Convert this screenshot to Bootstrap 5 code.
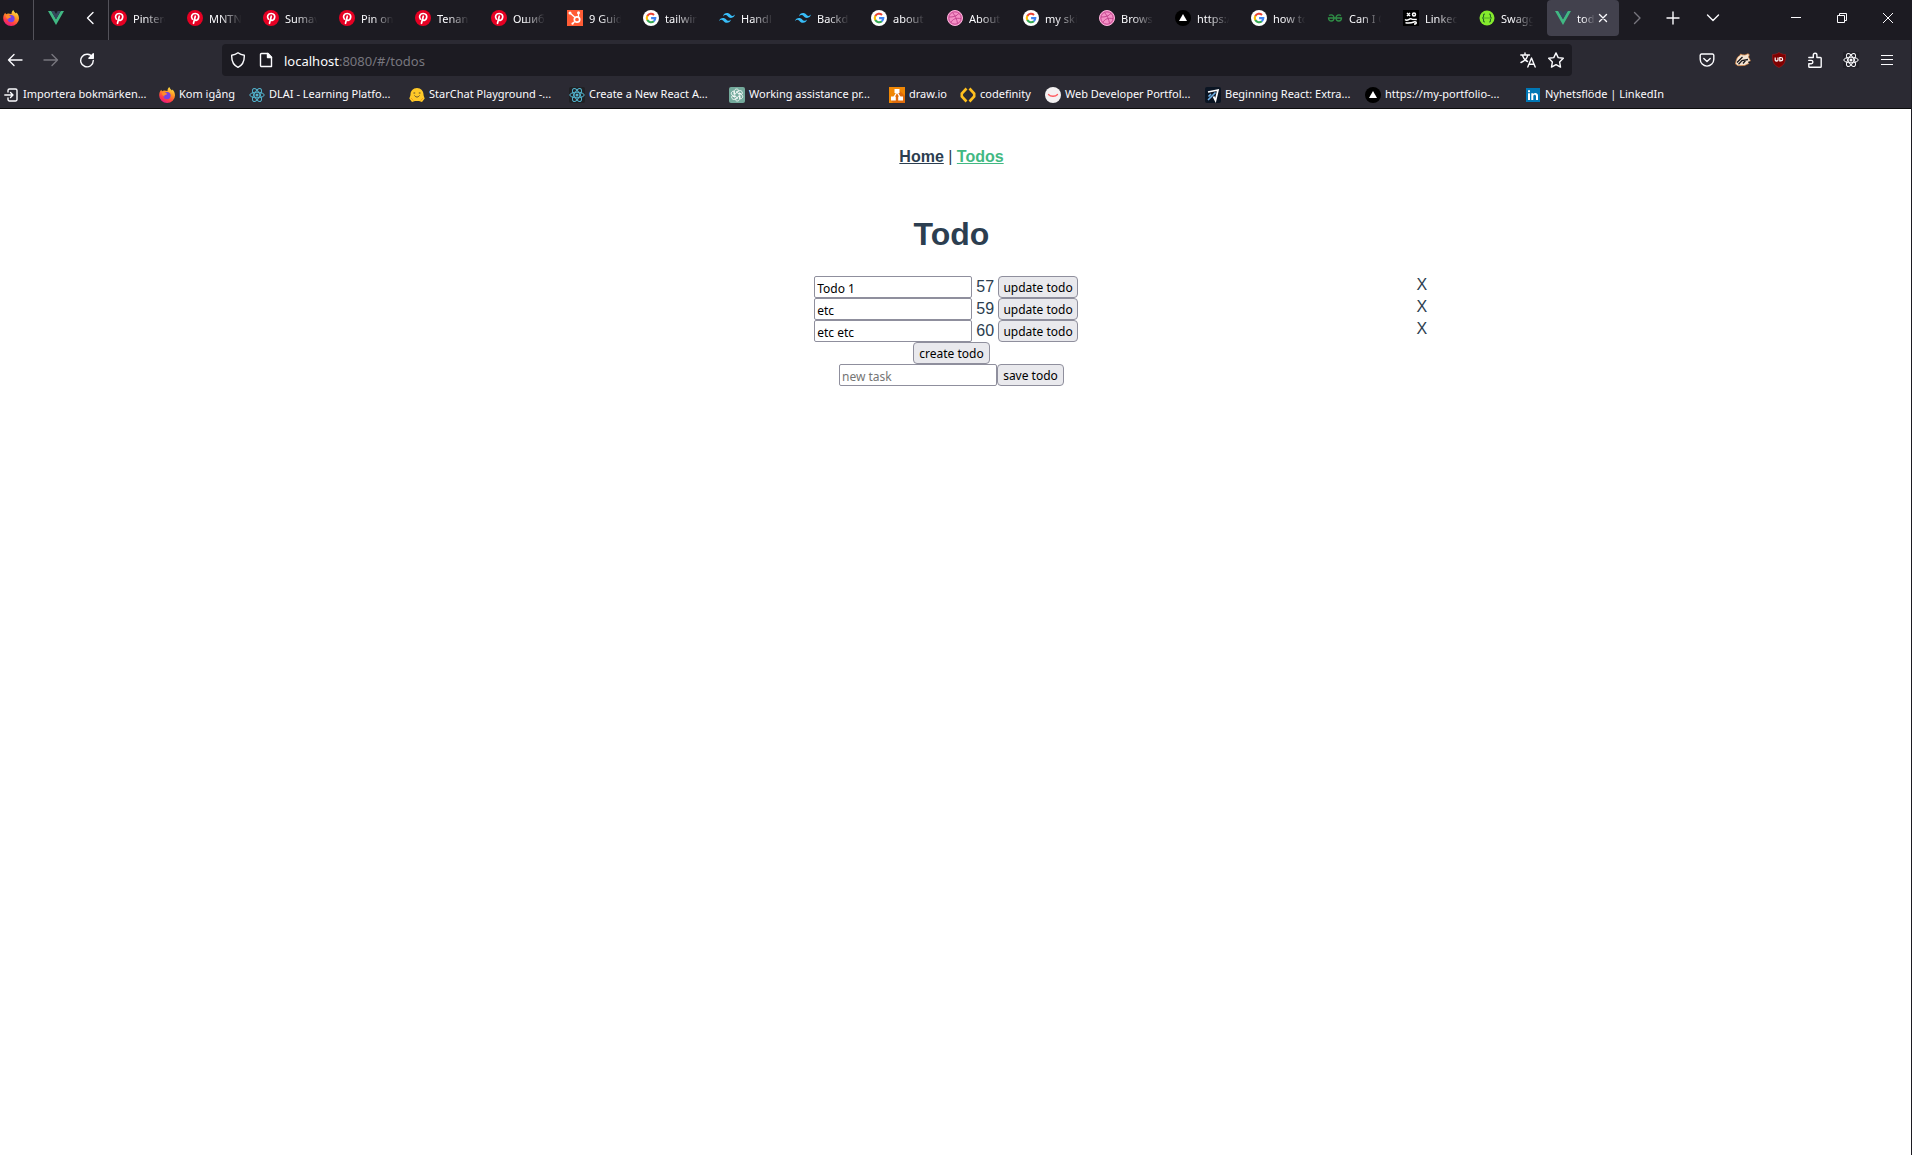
<!DOCTYPE html>
<html lang="sv">
<head>
<meta charset="utf-8">
<meta name="viewport" content="width=device-width, initial-scale=1">
<title>todo</title>
<link href="https://cdn.jsdelivr.net/npm/bootstrap@5.3.0/dist/css/bootstrap.min.css" rel="stylesheet">
<style>
  body { background: #fff; border-right: 1px solid #1c1b22; font-family: "Liberation Sans", Arial, sans-serif; }
  button { color: inherit; }
  svg { display: block; flex: none; }

  /* browser chrome */
  .chrome { background: #2b2a33; color: #fbfbfe; font: 11px/16px "Noto Sans", "Open Sans", sans-serif; border-bottom: 1px solid #0c0c0d; }
  .chrome a { color: inherit; text-decoration: none; }
  .icon-btn { background: none; border: 0; padding: 0; display: flex; align-items: center; justify-content: center; width: 36px; height: 32px; flex: none; }
  .dimmed { color: #77767e; }
  .line-art { fill: none; stroke: currentColor; stroke-width: 1.4; stroke-linecap: round; stroke-linejoin: round; }

  .tab-strip { background: #1c1b22; height: 40px; }
  .pinned { height: 40px; border-right: 1px solid #53525a; padding-bottom: 4px; flex: none; }
  .pin-first { width: 34px; padding-left: 3px; }
  .pin-second { width: 75px; padding-left: 14px; }
  .tab-scroller { height: 36px; min-width: 0; overflow: hidden; }
  .tab-item { width: 76px; flex: none; padding: 0 10px 0 8px; gap: 6px; height: 36px; }
  .tab-item.current { width: 72px; background: #42414d; border-radius: 4px; padding-right: 8px; }
  .tab-text { flex: 1; min-width: 0; padding-top: 2px; overflow: hidden; white-space: nowrap; -webkit-mask-image: linear-gradient(to right, #000 30%, transparent 90%); mask-image: linear-gradient(to right, #000 30%, transparent 90%); }
  .tab-item.current .tab-text { flex: 0 0 20px; }
  .tab-item.current .icon-btn { width: 12px; margin-left: -6px; }
  .strip-tools { width: 292px; height: 36px; flex: none; }
  .win-btn { width: 46px; }
  .strip-tools .tab-list { width: 44px; }

  .nav-bar { height: 41px; padding: 4px 6px 5px 0; }
  .nav-left { width: 222px; padding-left: 0; flex: none; margin-left: -3px; margin-right: 3px; }
  .address { background: #1c1b22; border-radius: 4px; height: 32px; padding: 0 2px 0 8px; }
  .address-tool { width: 28px; }
  .address-text { font-size: 13px; line-height: 20px; padding-top: 1px; }
  .address-page { margin: 0 10px 0 12px; }
  .ext-tools { width: 333px; flex: none; }

  .bookmarks { height: 27px; padding: 0 4px 2px; white-space: nowrap; overflow: hidden; }
  .bm { display: flex; align-items: center; gap: 4px; flex: none; }
  .bm > svg { margin-top: 2px; }
  .bm-import { width: 155px; }
  .bm-short { width: 90px; }
  .bm-long { width: 160px; }
  .bm-draw { width: 71px; }
  .bm-code { width: 85px; }

  /* todo page */
  .todo-app { color: #2c3e50; font-size: 16px; line-height: 18px; padding: 9px 8px 0 0; text-align: center; }
  .site-nav { padding: 30px; }
  .site-nav a { color: #2c3e50; font-weight: 700; }
  .site-nav a.active-page { color: #42b983; }
  .todo-app h1 { font-size: 32px; line-height: 37px; font-weight: 700; margin: 20px 0 23px; }
  .todo-row { height: 22px; }
  .todo-id { line-height: 16px; padding-top: 3px; }
  .field, .push { font: 12px/18px "Noto Sans", Tahoma, sans-serif; color: #000; height: 22px; border: 1px solid #8f8f9d; white-space: nowrap; }
  .field { width: 158px; background: #fff; border-radius: 2px; padding: 2px 2px 0; }
  .field::placeholder { color: #757575; opacity: 1; }
  .push { background: #e9e9ed; border-radius: 4px; padding: 2px 0 0; }
  .push-update { width: 80px; }
  .push-create { width: 77px; }
  .push-save { width: 67px; }
  .remove { background: none; border: 0; padding: 0; height: 18px; line-height: 18px; }
</style>
<script src="https://cdn.jsdelivr.net/npm/bootstrap@5.3.0/dist/js/bootstrap.bundle.min.js"></script>
</head>
<body class="min-vh-100">

<svg width="0" height="0" class="position-absolute" aria-hidden="true">
  <defs>
    <linearGradient id="flame" x1=".8" y1="0" x2=".3" y2="1"><stop offset="0" stop-color="#fff04a"/><stop offset=".4" stop-color="#ff9422"/><stop offset=".75" stop-color="#ff3b47"/><stop offset="1" stop-color="#e31587"/></linearGradient>
    <symbol id="firefox" viewBox="0 0 16 16">
      <path fill="url(#flame)" d="M10.3 0c.5 1.600 1.700 2.300 2.700 3.400l.5-.9C15 4 16 6 16 8.400A7.800 7.500 0 0 1 .2 8.400C.1 6.300.9 4.200 2.200 2.700L3 4.300l2-.7 3.500.4C8.500 2.300 9.200.8 10.300 0z"/>
      <circle cx="8" cy="8.600" r="3.600" fill="#7542e5"/>
      <path fill="#ff8a2a" d="M2.600 5.500 5.500 5l2.700 1.700c-.5 1.100-2 1-2.500 1.400l-.4 1.300C3.800 9 3 7.300 2.600 5.500z"/>
    </symbol>
    <symbol id="vue" viewBox="0 0 16 16"><path fill="#41b883" d="M0 1h3.300L8 9.200 12.700 1H16L8 15z"/><path fill="#35495e" d="M3.300 1h3L8 4l1.700-3h3L8 9.200z"/></symbol>
    <symbol id="pin" viewBox="0 0 16 16"><circle cx="8" cy="8" r="8" fill="#e60023"/><g fill="none" stroke="#fff" stroke-width="1.700" stroke-linecap="round"><path d="M5.300 9C3.500 6.800 5 3.500 8.200 3.500c2.700 0 4 2 3.400 4.200-.6 2.600-3.200 3.400-4.100 1.800"/><path d="M8.300 6.200 6.500 13.300"/></g></symbol>
    <symbol id="hubspot" viewBox="0 0 16 16"><path fill="#ff5c35" d="M0 0h16v16H0z"/><g fill="none" stroke="#fff"><circle cx="10" cy="9.500" r="2.700" stroke-width="1.700"/><path stroke-width="1.300" d="m3 3 5 4.500M11.500 3v4M7.700 11.500 5.700 13.500"/></g><g fill="#fff"><circle cx="3" cy="3" r="1.500"/><circle cx="11.500" cy="2.800" r="1.500"/><circle cx="5.500" cy="13.700" r="1.100"/></g></symbol>
    <symbol id="google" viewBox="0 0 16 16"><circle cx="8" cy="8" r="8" fill="#fff"/><g fill="none" stroke-width="2.100"><path stroke="#ea4335" d="M4.300 6A4.300 4.300 0 0 1 11 4.900"/><path stroke="#fbbc05" d="M4.400 10.200A4.300 4.300 0 0 1 4.400 5.800"/><path stroke="#34a853" d="M4.300 10A4.300 4.300 0 0 0 10.900 11.200"/><path stroke="#4285f4" d="M10.800 11.200A4.300 4.300 0 0 0 12.300 8.100H8.100"/></g></symbol>
    <symbol id="tailwind" viewBox="0 0 16 16"><path fill="#38bdf8" d="M4 6.400C4.600 4.200 6 3.100 8 3.100c3 0 3.400 2.400 5 2.800 1 .2 2-.2 3-1.300-.6 2.200-2 3.300-4 3.300-3 0-3.400-2.400-5-2.800-1-.2-2 .2-3 1.300zM0 11.200c.6-2.200 2-3.300 4-3.300 3 0 3.400 2.400 5 2.800 1 .2 2-.2 3-1.300-.6 2.200-2 3.300-4 3.300-3 0-3.400-2.400-5-2.800-1-.2-2 .2-3 1.300z"/></symbol>
    <symbol id="dribbble" viewBox="0 0 16 16"><circle cx="8" cy="8" r="7.500" fill="#f490c6" stroke="#ffb1dc"/><g fill="none" stroke="#c0408a" stroke-width=".9"><circle cx="8" cy="8" r="6.200"/><path d="M5.500 2.500c3 3.500 4.500 7 5 11M2 7c4 .2 8-.8 10-3.800M4 12.500C5.500 9 9.500 7.500 14 8.700"/></g></symbol>
    <symbol id="vercel" viewBox="0 0 16 16"><circle cx="8" cy="8" r="8" fill="#000"/><path fill="#fff" d="m8 4 4 7H4z"/></symbol>
    <symbol id="geeks" viewBox="0 0 16 16"><g fill="none" stroke="#2f8d46" stroke-width="1.300"><path d="M2 5.600C4 4 7 5 7 8c0 4-5.500 4-5.500 0h13c0 4-5.500 4-5.500 0 0-3 3-4 5-2.400"/></g></symbol>
    <symbol id="linkface" viewBox="0 0 16 16"><path d="M0 0h16v16H0z"/><g fill="none" stroke="#fff" stroke-width="1.500"><path d="m4 3 3 3M7 3 4 6M2 9.500c3 2.500 4-2 7-.3l4.800.3M2.500 12.800c4 .5 7-.2 8.500-.8 3-.8 3 2 0 2"/><circle cx="11" cy="4.500" r="1.500"/></g></symbol>
    <symbol id="swagger" viewBox="0 0 16 16"><circle cx="8" cy="8" r="7.500" fill="#85ea2d"/><g fill="none" stroke="#246b25" stroke-width="1.100"><path d="M6 4c-2 0-1.300 1.500-1.500 2.800C4.400 7.600 4 8 3.200 8c.8 0 1.200.4 1.300 1.200C4.700 10.500 4 12 6 12M10 4c2 0 1.300 1.500 1.500 2.800.1.800.5 1.200 1.300 1.200-.8 0-1.200.4-1.300 1.200C11.300 10.500 12 12 10 12"/><path stroke-dasharray="1 1" d="M5.500 8h5"/></g></symbol>
    <symbol id="atom" viewBox="0 0 16 16"><g fill="none" stroke="currentColor"><ellipse cx="8" cy="8" rx="7.200" ry="2.800"/><ellipse cx="8" cy="8" rx="7.200" ry="2.800" transform="rotate(60 8 8)"/><ellipse cx="8" cy="8" rx="7.200" ry="2.800" transform="rotate(120 8 8)"/></g><circle cx="8" cy="8" r="1.500" fill="currentColor"/></symbol>
  </defs>
</svg>

<header class="chrome">
  <div class="tab-strip d-flex">
    <a href="#" class="pinned pin-first d-flex align-items-center" aria-label="Firefox"><svg width="16" height="16"><use href="#firefox"/></svg></a>
    <div class="pinned pin-second d-flex align-items-center justify-content-between">
      <a href="#" aria-label="Vue"><svg width="16" height="16"><use href="#vue"/></svg></a>
      <button class="icon-btn" aria-label="Bakåt bland flikar"><svg class="line-art" width="12" height="14" viewBox="0 0 12 14"><path d="M9 1.500 3.500 7 9 12.500"/></svg></button>
    </div>
    <nav class="tab-scroller d-flex flex-grow-1 justify-content-end" aria-label="Flikar">
      <a href="#" class="tab-item d-flex align-items-center"><svg width="16" height="16"><use href="#pin"/></svg><span class="tab-text">Pintere</span></a>
      <a href="#" class="tab-item d-flex align-items-center"><svg width="16" height="16"><use href="#pin"/></svg><span class="tab-text">MNTN</span></a>
      <a href="#" class="tab-item d-flex align-items-center"><svg width="16" height="16"><use href="#pin"/></svg><span class="tab-text">Sumav</span></a>
      <a href="#" class="tab-item d-flex align-items-center"><svg width="16" height="16"><use href="#pin"/></svg><span class="tab-text">Pin on</span></a>
      <a href="#" class="tab-item d-flex align-items-center"><svg width="16" height="16"><use href="#pin"/></svg><span class="tab-text">Tenang</span></a>
      <a href="#" class="tab-item d-flex align-items-center"><svg width="16" height="16"><use href="#pin"/></svg><span class="tab-text">Ошиб</span></a>
      <a href="#" class="tab-item d-flex align-items-center"><svg width="16" height="16"><use href="#hubspot"/></svg><span class="tab-text">9 Guid</span></a>
      <a href="#" class="tab-item d-flex align-items-center"><svg width="16" height="16"><use href="#google"/></svg><span class="tab-text">tailwin</span></a>
      <a href="#" class="tab-item d-flex align-items-center"><svg width="16" height="16"><use href="#tailwind"/></svg><span class="tab-text">Handl</span></a>
      <a href="#" class="tab-item d-flex align-items-center"><svg width="16" height="16"><use href="#tailwind"/></svg><span class="tab-text">Backd</span></a>
      <a href="#" class="tab-item d-flex align-items-center"><svg width="16" height="16"><use href="#google"/></svg><span class="tab-text">about</span></a>
      <a href="#" class="tab-item d-flex align-items-center"><svg width="16" height="16"><use href="#dribbble"/></svg><span class="tab-text">About</span></a>
      <a href="#" class="tab-item d-flex align-items-center"><svg width="16" height="16"><use href="#google"/></svg><span class="tab-text">my ski</span></a>
      <a href="#" class="tab-item d-flex align-items-center"><svg width="16" height="16"><use href="#dribbble"/></svg><span class="tab-text">Brows</span></a>
      <a href="#" class="tab-item d-flex align-items-center"><svg width="16" height="16"><use href="#vercel"/></svg><span class="tab-text">https:/</span></a>
      <a href="#" class="tab-item d-flex align-items-center"><svg width="16" height="16"><use href="#google"/></svg><span class="tab-text">how to</span></a>
      <a href="#" class="tab-item d-flex align-items-center"><svg width="16" height="16"><use href="#geeks"/></svg><span class="tab-text">Can I C</span></a>
      <a href="#" class="tab-item d-flex align-items-center"><svg width="16" height="16"><use href="#linkface"/></svg><span class="tab-text">Linked</span></a>
      <a href="#" class="tab-item d-flex align-items-center"><svg width="16" height="16"><use href="#swagger"/></svg><span class="tab-text">Swagg</span></a>
      <div class="tab-item current d-flex align-items-center"><svg width="16" height="16"><use href="#vue"/></svg><a href="#" class="tab-text">tod</a><button class="icon-btn" aria-label="Stäng flik"><svg class="line-art" width="10" height="10" viewBox="0 0 10 10"><path d="m1.500 1.500 7 7m0-7-7 7"/></svg></button></div>
    </nav>
    <div class="strip-tools d-flex align-items-center">
      <button class="icon-btn dimmed" aria-label="Framåt bland flikar"><svg class="line-art" width="12" height="14" viewBox="0 0 12 14"><path d="M3.500 1.500 9 7l-5.500 5.500"/></svg></button>
      <button class="icon-btn" aria-label="Ny flik"><svg class="line-art" width="14" height="14" viewBox="0 0 14 14"><path d="M7 1v12M1 7h12"/></svg></button>
      <button class="icon-btn tab-list" aria-label="Lista flikar"><svg class="line-art" width="14" height="12" viewBox="0 0 14 12"><path d="m1.500 3 5.500 5.500L12.500 3"/></svg></button>
      <button class="icon-btn win-btn ms-auto" aria-label="Minimera"><svg width="10" height="10"><path fill="currentColor" d="M0 4h10v1H0z"/></svg></button>
      <button class="icon-btn win-btn" aria-label="Återställ"><svg width="10" height="10" fill="none" stroke="currentColor"><path d="M.5 2.500h7v7h-7zM2.500 2.500v-2h7v7h-2"/></svg></button>
      <button class="icon-btn win-btn" aria-label="Stäng"><svg width="10" height="10" fill="none" stroke="currentColor"><path d="m0 0 10 10M10 0 0 10"/></svg></button>
    </div>
  </div>

  <div class="nav-bar d-flex align-items-center">
    <div class="nav-left d-flex">
      <button class="icon-btn" aria-label="Bakåt"><svg class="line-art" width="16" height="16" viewBox="0 0 16 16"><path d="M15 8H1.500M7 2.500 1.500 8 7 13.500"/></svg></button>
      <button class="icon-btn dimmed" aria-label="Framåt"><svg class="line-art" width="16" height="16" viewBox="0 0 16 16"><path d="M1 8h13.500M9 2.500 14.500 8 9 13.500"/></svg></button>
      <button class="icon-btn" aria-label="Ladda om"><svg class="line-art" width="16" height="16" viewBox="0 0 16 16"><path d="M13.500 5.500A6.300 6.300 0 1 0 14.300 8.500"/><path fill="currentColor" d="M14.300 1.800v4.400H9.900z"/></svg></button>
    </div>
    <div class="address d-flex align-items-center flex-grow-1">
      <svg class="line-art" width="16" height="16" viewBox="0 0 16 16"><path d="M8 .8c2 1.500 4 2.200 6.300 2.500.2 5.500-1.300 9.700-6.300 12C3 13 1.500 8.800 1.700 3.300 4 3 6 2.300 8 .8z"/></svg>
      <svg class="line-art address-page" width="16" height="16" viewBox="0 0 16 16"><path d="M3.500 1.500H10l3.500 3.700v9.300H3.500a1 1 0 0 1-1-1v-11a1 1 0 0 1 1-1z"/><path fill="currentColor" d="M9.500 1.500v4h4z"/></svg>
      <span class="address-text flex-grow-1">localhost<span class="dimmed">:8080/#/todos</span></span>
      <button class="icon-btn address-tool" aria-label="Översätt"><svg class="line-art" width="16" height="16" viewBox="0 0 16 16"><path d="M.8 3h8.700M5 1v2M8 3C7 6.500 4.500 9 1 10.500M2.500 3.500C3.500 6.500 5.500 8.500 7.500 9.500M7.800 15 11.500 6l3.700 9M9 12.300h5"/></svg></button>
      <button class="icon-btn address-tool" aria-label="Bokmärk"><svg class="line-art" width="16" height="16" viewBox="0 0 16 16"><path d="m8 .9 2.200 4.700 5.100.7-3.700 3.600.9 5.200L8 12.600l-4.500 2.500.9-5.200L.7 6.300l5.100-.7z"/></svg></button>
    </div>
    <div class="ext-tools d-flex justify-content-end">
      <button class="icon-btn" aria-label="Pocket"><svg class="line-art" width="16" height="16" viewBox="0 0 16 16"><path d="M2.500 2h11a1.300 1.300 0 0 1 1.300 1.300v4a6.800 6.800 0 0 1-13.600 0v-4A1.300 1.300 0 0 1 2.500 2zM4.800 6.500 8 9.500l3.200-3"/></svg></button>
      <button class="icon-btn" aria-label="Privacy Badger"><svg width="16" height="16" viewBox="0 0 16 16"><path fill="#f4e4d3" stroke="#d7813b" stroke-width=".7" d="M.5 12C1 7 3 4 5 3.500L5.500 2l2 .8L10 3l3-1.300 1.300 1-.8 2.300 1.800 3.500-1.500 3-4.300 2-6.500.2z"/><path fill="none" stroke="#17171b" stroke-width="1.300" d="M2 10.500 7.500 5M3.500 12.300 7 8.500l6-1M8 11.500l2.500-3"/><path fill="#17171b" d="M13.300 9.500h2v1.500h-2z"/></svg></button>
      <button class="icon-btn" aria-label="uBlock Origin"><svg width="16" height="16" viewBox="0 0 16 16"><path fill="#800000" stroke="#a11c22" stroke-width=".6" d="M8 .5c2 1.400 4.200 2 6.500 2 .2 6.500-.7 10.500-6.500 13C2.200 13 1.300 9 1.500 2.500c2.300 0 4.500-.6 6.500-2z"/><path fill="none" stroke="#fff" stroke-width="1.200" d="M4.200 5.500v2.700c0 1.100 2.800 1.100 2.800 0V5.500M8.800 5.500v3.300h.9c2.600 0 2.600-3.300 0-3.300z"/></svg></button>
      <button class="icon-btn" aria-label="Tillägg"><svg class="line-art" width="16" height="16" viewBox="0 0 16 16"><path d="M1.800 5.500h4.500V3a1.800 1.800 0 0 1 3.600 0v2.500h3.500a.8.8 0 0 1 .8.800v8.200a.8.800 0 0 1-.8.800H2.600a.8.800 0 0 1-.8-.8v-2.700h2.400a1.700 1.700 0 0 0 0-3.400H1.800"/></svg></button>
      <button class="icon-btn" aria-label="React Developer Tools"><svg width="16" height="16"><path fill="#222129" d="M0 0h16v16H0z"/><use href="#atom"/></svg></button>
      <button class="icon-btn" aria-label="Meny"><svg width="12" height="12" viewBox="0 0 12 12"><path fill="currentColor" d="M0 1h12v1H0zM0 5h12v1H0zM0 10h12v1H0z"/></svg></button>
    </div>
  </div>

  <nav class="bookmarks d-flex align-items-center" aria-label="Bokmärken">
    <a href="#" class="bm bm-import"><svg class="line-art" width="15" height="16" viewBox="0 0 15 16"><path d="M4 5V3.500A1.500 1.500 0 0 1 5.500 2h6A1.500 1.500 0 0 1 13 3.500v9a1.500 1.500 0 0 1-1.500 1.500h-6A1.500 1.500 0 0 1 4 12.500V11M.8 8H9M6.500 5.500 9 8l-2.500 2.500"/></svg>Importera bokmärken...</a>
    <a href="#" class="bm bm-short"><svg width="16" height="16"><use href="#firefox"/></svg>Kom igång</a>
    <a href="#" class="bm bm-long"><svg width="16" height="16" color="#53b5cf"><use href="#atom"/></svg>DLAI - Learning Platfo...</a>
    <a href="#" class="bm bm-long"><svg width="16" height="16" viewBox="0 0 16 16"><path fill="#ffc928" d="M8 1c4 0 6.500 3 6.500 6.500 0 1.500.8 2.500 1.200 4L13 15l-3-1H6l-3 1-2.700-3.500c.4-1.500 1.200-2.500 1.200-4C1.500 4 4 1 8 1z"/><path fill="none" stroke="#594a31" d="M4.500 6h1.700M9.800 6h1.700M5.500 8.500c1.500 2 3.500 2 5 0"/><path fill="none" stroke="#f29b1d" d="m2 11 2.500 2.500M14 11l-2.500 2.500"/></svg>StarChat Playground -...</a>
    <a href="#" class="bm bm-long"><svg width="16" height="16" color="#53b5cf"><rect width="16" height="16" rx="2" fill="#202124"/><use href="#atom"/></svg>Create a New React A...</a>
    <a href="#" class="bm bm-long"><svg width="16" height="16" viewBox="0 0 16 16"><rect width="16" height="16" rx="2" fill="#74aa9c"/><g fill="none" stroke="#fff" stroke-width=".8"><path id="petal" d="M8 5.500 5.500 7V4.200C5.500 1.500 9 1.300 9.800 3.500L7 5"/><use href="#petal" transform="rotate(60 8 8)"/><use href="#petal" transform="rotate(120 8 8)"/><use href="#petal" transform="rotate(180 8 8)"/><use href="#petal" transform="rotate(240 8 8)"/><use href="#petal" transform="rotate(300 8 8)"/></g></svg>Working assistance pr...</a>
    <a href="#" class="bm bm-draw"><svg width="16" height="16" viewBox="0 0 16 16"><path fill="#f08705" d="M0 0h16v16H0z"/><path fill="#df6c0c" d="m10 3 6 6v7H4l-2-3z"/><path stroke="#fff" stroke-width="1.300" d="m8 5-3.500 6M8 5l3.500 6"/><path fill="#fff" d="M5.500 2h5v4h-5zM2 9.500h4.800v4H2zM9.200 9.500H14v4H9.200z"/></svg>draw.io</a>
    <a href="#" class="bm bm-code"><svg width="16" height="16" viewBox="0 0 16 16" fill="none" stroke="#ffc01f" stroke-width="2.600"><path d="M6.500 1.500 1.800 6.500v3l4.700 5M9.500 1.500l4.700 5v3l-4.700 5"/></svg>codefinity</a>
    <a href="#" class="bm bm-long"><svg width="16" height="16" viewBox="0 0 16 16"><circle cx="8" cy="8" r="8" fill="#f4f1f2"/><path fill="none" stroke="#ff5a5f" stroke-width="1.300" stroke-linecap="round" d="M3.500 7.500c2 2.300 7 2.300 9 0"/></svg>Web Developer Portfol...</a>
    <a href="#" class="bm bm-long"><svg width="16" height="16" viewBox="0 0 16 16"><rect width="16" height="16" rx="2" fill="#0b1523"/><path fill="none" stroke="#fff" stroke-width="1.700" d="m3 5 10-2-2.500 10.500-2-4"/><path stroke="#6fb1e8" stroke-width="1.600" d="m3 13 7.500-7.500M3.500 9.500 6 7"/></svg>Beginning React: Extra...</a>
    <a href="#" class="bm bm-long"><svg width="16" height="16"><use href="#vercel"/></svg>https://my-portfolio-...</a>
    <a href="#" class="bm"><svg width="16" height="16" viewBox="0 0 16 16"><path fill="#0077b5" d="M1 1h14v14H1z"/><path fill="#fff" d="M3 6.200h2V13H3zM3 3.300h2v1.900H3zM6.300 6.200h2v.9c1.200-1.700 4.700-1.500 4.700 1.600V13h-2V9.300c0-2-2.700-2-2.700 0V13h-2z"/></svg>Nyhetsflöde | LinkedIn</a>
  </nav>
</header>

<main class="todo-app">
  <nav class="site-nav"><a href="#/">Home</a> | <a href="#/todos" class="active-page" aria-current="page">Todos</a></nav>
  <h1>Todo</h1>
  <section class="w-50 mx-auto">
    <div class="todo-row d-flex">
      <div class="d-flex flex-grow-1 justify-content-center gap-1">
        <input class="field" type="text" value="Todo 1" aria-label="Todo 57"><span class="todo-id">57</span><button class="push push-update">update todo</button>
      </div>
      <button class="remove">X</button>
    </div>
    <div class="todo-row d-flex">
      <div class="d-flex flex-grow-1 justify-content-center gap-1">
        <input class="field" type="text" value="etc" aria-label="Todo 59"><span class="todo-id">59</span><button class="push push-update">update todo</button>
      </div>
      <button class="remove">X</button>
    </div>
    <div class="todo-row d-flex">
      <div class="d-flex flex-grow-1 justify-content-center gap-1">
        <input class="field" type="text" value="etc etc" aria-label="Todo 60"><span class="todo-id">60</span><button class="push push-update">update todo</button>
      </div>
      <button class="remove">X</button>
    </div>
  </section>
  <div class="d-flex justify-content-center"><button class="push push-create">create todo</button></div>
  <form class="d-flex justify-content-center">
    <input class="field" type="text" placeholder="new task" aria-label="new task"><button class="push push-save" type="button">save todo</button>
  </form>
</main>
</body>
</html>
